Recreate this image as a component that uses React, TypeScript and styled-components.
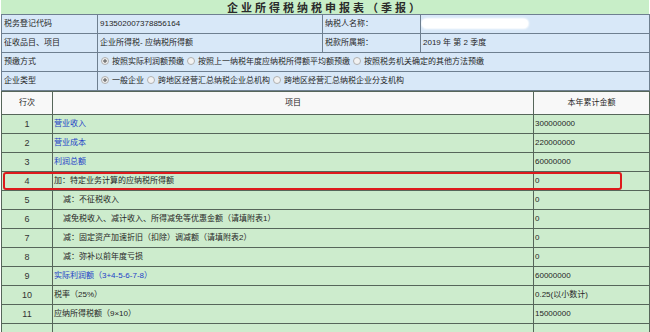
import React from 'react'
import styled, { createGlobalStyle } from 'styled-components'

const GlobalStyle = createGlobalStyle`
  html, body {
    margin: 0;
    padding: 0;
    background: #ffffff;
  }
  body {
    font-family: "Liberation Sans", "Noto Sans CJK SC", sans-serif;
  }
`

const Page = styled.div`
  position: relative;
  width: 650px;
  height: 332px;
  overflow: hidden;
  padding-left: 1px;
  box-sizing: border-box;
`

const TitleBar = styled.div`
  width: 648px;
  height: 14px;
  background: #c8eec8;
  text-align: center;
  font-family: "Noto Sans CJK SC", sans-serif;
  font-size: 11px;
  line-height: 14px;
  font-weight: 700;
  letter-spacing: 3px;
  color: #2a2a2a;
  overflow: hidden;
`

const Grid = styled.table<{ $bg: string; $line: string }>`
  width: 648px;
  table-layout: fixed;
  border-collapse: collapse;
  background: ${({ $bg }) => $bg};
  font-size: 8px;
  line-height: 10px;
  color: #262626;

  td {
    border: 1px solid ${({ $line }) => $line};
  }
`

const Cell = styled.td<{ $h?: number; $pad?: number; $center?: boolean }>`
  height: ${({ $h }) => $h ?? 18}px;
  padding: 0 0 0 ${({ $pad }) => $pad ?? 2}px;
  text-align: ${({ $center }) => ($center ? 'center' : 'left')};
  white-space: nowrap;
  overflow: hidden;
`

const HeadRow = styled.tr`
  background: #f8f8f8;
`

const RowNo = styled(Cell)`
  font-size: 9px;
  color: #333;
`

const ItemText = styled.span<{ $link?: boolean; $indent?: boolean }>`
  color: ${({ $link }) => ($link ? '#2340c8' : '#262626')};
  padding-left: ${({ $indent }) => ($indent ? 9 : 0)}px;
`

const Radio = styled.span<{ $checked?: boolean }>`
  display: inline-block;
  width: 6px;
  height: 6px;
  border-radius: 50%;
  border: 1px solid #b0b0b0;
  background: ${({ $checked }) =>
    $checked ? 'radial-gradient(circle, #7a7a7a 0 1.4px, #efefef 2px)' : '#f2f2f2'};
  margin: 0 3px 0 3px;
  vertical-align: -1px;
`

const Redacted = styled.span`
  display: inline-block;
  width: 106px;
  height: 9px;
  margin-left: -1px;
  border-radius: 5px;
  background: #ffffff;
  box-shadow: 0 0 2px 1px #ffffff;
  vertical-align: middle;
`

const Highlight = styled.div`
  position: absolute;
  left: 3px;
  top: 172px;
  width: 615px;
  height: 14px;
  border: 2px solid #de1a1c;
  border-radius: 3px;
  pointer-events: none;
`

type Row = { no: string; item: string; amount: string; link?: boolean; indent?: boolean }

const rows: Row[] = [
  { no: '1', item: '营业收入', amount: '300000000', link: true },
  { no: '2', item: '营业成本', amount: '220000000', link: true },
  { no: '3', item: '利润总额', amount: '60000000', link: true },
  { no: '4', item: '加：特定业务计算的应纳税所得额', amount: '0' },
  { no: '5', item: '减：不征税收入', amount: '0', indent: true },
  { no: '6', item: '减免税收入、减计收入、所得减免等优惠金额（请填附表1）', amount: '0', indent: true },
  { no: '7', item: '减：固定资产加速折旧（扣除）调减额（请填附表2）', amount: '0', indent: true },
  { no: '8', item: '减：弥补以前年度亏损', amount: '0', indent: true },
  { no: '9', item: '实际利润额（3+4-5-6-7-8）', amount: '60000000', link: true },
  { no: '10', item: '税率（25%）', amount: '0.25(以小数计)' },
  { no: '11', item: '应纳所得税额（9×10）', amount: '15000000' },
  { no: '', item: '', amount: '' },
]

const payModes = ['按照实际利润额预缴', '按照上一纳税年度应纳税所得额平均额预缴', '按照税务机关确定的其他方法预缴']
const orgTypes = ['一般企业', '跨地区经营汇总纳税企业总机构', '跨地区经营汇总纳税企业分支机构']

function Options({ items }: { items: string[] }) {
  return (
    <>
      {items.map((label, i) => (
        <React.Fragment key={label}>
          <Radio $checked={i === 0} />
          {label}
        </React.Fragment>
      ))}
    </>
  )
}

export default function App() {
  return (
    <Page>
      <GlobalStyle />
      <TitleBar>企业所得税纳税申报表（季报）</TitleBar>
      <Grid $bg="#d8e8f8" $line="#6e7f90">
        <colgroup>
          <col style={{ width: 96 }} />
          <col style={{ width: 225 }} />
          <col style={{ width: 98 }} />
          <col style={{ width: 229 }} />
        </colgroup>
        <tbody>
          <tr>
            <Cell>税务登记代码</Cell>
            <Cell>913502007378856164</Cell>
            <Cell>纳税人名称：</Cell>
            <Cell>
              <Redacted />
            </Cell>
          </tr>
          <tr>
            <Cell>征收品目、项目</Cell>
            <Cell>企业所得税- 应纳税所得额</Cell>
            <Cell>税款所属期：</Cell>
            <Cell>2019 年 第 2 季度</Cell>
          </tr>
          <tr>
            <Cell>预缴方式</Cell>
            <Cell colSpan={3} $pad={0}>
              <Options items={payModes} />
            </Cell>
          </tr>
          <tr>
            <Cell>企业类型</Cell>
            <Cell colSpan={3} $pad={0}>
              <Options items={orgTypes} />
            </Cell>
          </tr>
        </tbody>
      </Grid>
      <Grid $bg="#cdeccd" $line="#56665a">
        <colgroup>
          <col style={{ width: 51 }} />
          <col style={{ width: 481 }} />
          <col style={{ width: 116 }} />
        </colgroup>
        <tbody>
          <HeadRow>
            <Cell $h={22} $center $pad={0}>行次</Cell>
            <Cell $h={22} $center $pad={0}>项目</Cell>
            <Cell $h={22} $center $pad={0}>本年累计金额</Cell>
          </HeadRow>
          {rows.map((r, i) => (
            <tr key={i}>
              <RowNo $center $pad={0}>{r.no}</RowNo>
              <Cell $pad={1}>
                <ItemText $link={r.link} $indent={r.indent}>{r.item}</ItemText>
              </Cell>
              <Cell $pad={1}>{r.amount}</Cell>
            </tr>
          ))}
        </tbody>
      </Grid>
      <Highlight />
    </Page>
  )
}
